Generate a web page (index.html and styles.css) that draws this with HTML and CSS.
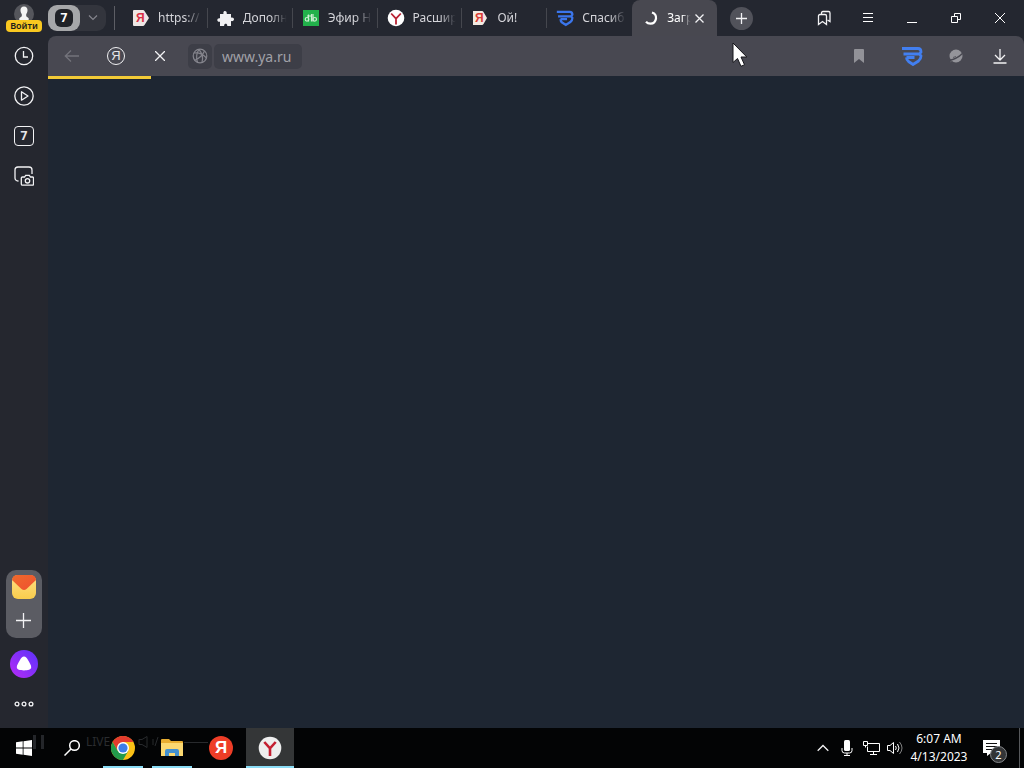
FILE: index.html
```html
<!DOCTYPE html>
<html lang="ru">
<head>
<meta charset="utf-8">
<meta name="viewport" content="width=device-width, initial-scale=1">
<title>Загрузка</title>
<link rel="stylesheet" href="styles.css">
</head>
<body>
<div class="browser">
  <aside class="sidebar">
    <button class="profile" aria-label="Войти">
      <svg class="avatar" width="20" height="20" viewBox="0 0 20 20"><circle cx="10" cy="10" r="10" fill="#55565c"/><path d="M10 2.500c2.500 0 3.700 1.800 3.500 4.300-.1 1.600-.8 2.800-1.300 3.400v2l2.500 2V20H5.300v-5.800l2.500-2v-2C7.300 9.600 6.600 8.400 6.500 6.800 6.300 4.300 7.500 2.500 10 2.500z" fill="#f4f4f4"/></svg>
      <span class="login">Войти</span>
    </button>
    <nav class="side-nav">
      <button class="side-btn" aria-label="История"><svg width="20" height="20" viewBox="0 0 20 20" class="line"><circle cx="10" cy="10" r="8.700"/><path d="M9.500 5v6H14"/></svg></button>
      <button class="side-btn" aria-label="Видео"><svg width="20" height="20" viewBox="0 0 20 20" class="line"><circle cx="10" cy="10" r="9.200"/><path d="M7.500 5.800v8.400L14 10z" stroke-linejoin="round"/></svg></button>
      <button class="side-btn" aria-label="Вкладки"><span class="count-box">7</span></button>
      <button class="side-btn" aria-label="Скриншот"><svg width="20" height="20" viewBox="1 0 20 20" class="line"><path d="M5.500 15H5a3 3 0 0 1-3-3V4a3 3 0 0 1 3-3h11a3 3 0 0 1 3 3v4"/><path d="M9.500 11h2l1.200-1.700h3.600l1.200 1.700h2q1 0 1 1v6q0 1.200-1 1.200h-10q-1.200 0-1.200-1.200V12q0-1 1.200-1z"/><circle cx="14.500" cy="14.800" r="2.200"/></svg></button>
    </nav>
    <div class="dock">
      <button class="dock-btn" aria-label="Почта"><svg width="24" height="24" viewBox="0 0 24 24"><defs><linearGradient id="mail" x1="0" y1="0" x2="0" y2="1"><stop offset="0" stop-color="#ffdf86"/><stop offset="1" stop-color="#f9cd4c"/></linearGradient><linearGradient id="flap" x1="0" y1="0" x2="1" y2="1"><stop offset="0" stop-color="#ef6a2b"/><stop offset="1" stop-color="#ee5030"/></linearGradient></defs><rect width="24" height="24" rx="6" fill="url(#mail)"/><path d="M0 5a5 5 0 0 1 5-5h14a5 5 0 0 1 5 5l-9.500 9q-2.500 2-5 0z" fill="url(#flap)"/></svg></button>
      <button class="dock-btn" aria-label="Добавить"><svg width="16" height="16" viewBox="0 0 16 16" class="line"><path d="M7.500 0v15M0 7.500h15"/></svg></button>
    </div>
    <button class="side-btn" aria-label="Алиса"><svg width="28" height="28" viewBox="0 0 28 28"><defs><linearGradient id="alice" x1="0" y1="1" x2="1" y2="0"><stop offset="0" stop-color="#b72cf6"/><stop offset="1" stop-color="#5a32fa"/></linearGradient></defs><circle cx="14" cy="14" r="14" fill="url(#alice)"/><path d="M14 6.500c1.800 0 2.700 1.300 4 3.500 1.600 2.800 3.200 5.300 3.200 7.100 0 2.700-3.200 3.400-7.200 3.400s-7.200-.7-7.200-3.400c0-1.800 1.600-4.300 3.200-7.100 1.300-2.200 2.200-3.500 4-3.500z" fill="#fff"/></svg></button>
    <button class="side-btn" aria-label="Ещё"><svg width="20" height="8" viewBox="0 0 20 8" class="line"><circle cx="3" cy="4" r="1.900"/><circle cx="10" cy="4" r="1.900"/><circle cx="17" cy="4" r="1.900"/></svg></button>
  </aside>

  <div class="main">
    <header class="tabbar">
      <div class="group">
        <button class="group-count"><span class="group-badge">7</span></button>
        <button class="group-more" aria-label="Группы вкладок"><svg width="12" height="8" viewBox="0 0 12 8" class="muted"><path d="M2 1.500l4 4 4-4"/></svg></button>
      </div>
      <div class="tabs">
        <a class="tab" href="#"><svg class="fav" viewBox="0 0 18 18"><path d="M1 2q0-1 1-1h9q1 0 1.500 1L17 9l-4.500 7q-.5 1-1.500 1H2q-1 0-1-1z" fill="#eee7e5"/><text x="4" y="13" class="ya-mark">Я</text></svg><span class="tab-title">https://</span></a>
        <a class="tab" href="#"><svg class="fav" viewBox="0 0 18 18"><path d="M3 5h3.500C5.500 1 10.500 1 9.700 5H14v3.700c4-1 4 4.300 0 3.400V17h-3.800c.7-3-3.700-3-3 0H3v-4.300c-3.600.8-3.600-4.200 0-3.400z" fill="#f1f1f3"/></svg><span class="tab-title">Дополн</span></a>
        <a class="tab" href="#"><svg class="fav" viewBox="0 0 18 18"><rect x="1" y="1" width="16" height="16" fill="#22b14b"/><path d="M6.500 5.500v7M9.500 5v7.500M11 5v7.500" stroke="#cbeed1" stroke-width="1.200"/><circle cx="5" cy="10.300" r="1.800" fill="none" stroke="#cbeed1" stroke-width="1.200"/><circle cx="12.700" cy="10.300" r="1.800" fill="none" stroke="#cbeed1" stroke-width="1.200"/><path d="M5 7h5" stroke="#cbeed1"/></svg><span class="tab-title">Эфир Н</span></a>
        <a class="tab" href="#"><svg class="fav" viewBox="0 0 18 18"><circle cx="9" cy="9" r="8.300" fill="#fff"/><path d="M4.200 4.500L9 9.600l4.800-5.100M9 9.600v5.900" fill="none" stroke="#b92334" stroke-width="1.800"/></svg><span class="tab-title">Расшир</span></a>
        <a class="tab" href="#"><svg class="fav" viewBox="0 0 18 18"><path d="M2 2h9q1 0 1.500 1L16 9l-3.500 6q-.5 1-1.500 1H2z" fill="#f3eae2"/><text x="4" y="13" class="ya-mark ya-orange">Я</text></svg><span class="tab-title">Ой!</span></a>
        <a class="tab" href="#"><svg class="fav" viewBox="0 0 22 20"><path d="M1 2.500h16q3 0 3 3.500L18.500 8 20 10q0 3-2.500 5L12 18.500 7.500 15.500Q5.500 14 5.500 11.500M2.500 8h16M5.500 11.500h8" fill="none" stroke="#3b76ec" stroke-width="2.800"/></svg><span class="tab-title">Спасиб</span></a>
        <div class="tab active"><svg class="fav" viewBox="0 0 18 18"><path d="M11 3.500q4.500 1.500 4 6-.8 5-5.500 5.200-2.800 0-4.500-2" fill="none" stroke="#fff" stroke-width="2.200"/></svg><span class="tab-title">Загр</span><button class="tab-close" aria-label="Закрыть вкладку"><svg width="9" height="9" viewBox="0 0 9 9" class="line"><path d="M.5.5l8 8M8.500.5l-8 8"/></svg></button></div>
      </div>
      <button class="new-tab" aria-label="Новая вкладка"><svg width="11" height="11" viewBox="0 0 11 11" class="line"><path d="M5.500 0v11M0 5.500h11"/></svg></button>
      <div class="window-controls">
        <button class="bar-btn" aria-label="Коллекции"><svg width="14" height="16" viewBox="0 0 14 16" class="line"><path d="M4.500 4V3q0-1.500 1.500-1.500h5.500Q13 1.500 13 3v8.500L10.500 10"/><path d="M1.500 14.500V6q0-1.500 1.500-1.500h5q1.500 0 1.500 1.500v8.500l-4-3z"/></svg></button>
        <button class="bar-btn" aria-label="Меню"><svg width="10" height="11" viewBox="0 0 10 11" class="thin"><path d="M0 .5h10M0 4.500h10M0 8.500h10"/></svg></button>
        <button class="bar-btn" aria-label="Свернуть"><svg width="10" height="10" viewBox="0 0 10 10" class="thin"><path d="M0 9.500h10"/></svg></button>
        <button class="bar-btn" aria-label="Развернуть"><svg width="10" height="10" viewBox="0 0 10 10" class="thin"><path d="M.5 3.500h6v6h-6zM3.500 3.500v-3h6v6h-3"/></svg></button>
        <button class="bar-btn" aria-label="Закрыть"><svg width="10" height="10" viewBox="0 0 10 10" class="thin"><path d="M0 0l10 10M10 0L0 10"/></svg></button>
      </div>
    </header>

    <div class="toolbar">
      <button class="bar-btn" aria-label="Назад"><svg width="16" height="14" viewBox="0 0 16 14" class="dim"><path d="M15 7H1.500M7 1.500L1.300 7 7 12.500"/></svg></button>
      <button class="bar-btn" aria-label="Яндекс"><span class="ya-round">Я</span></button>
      <button class="bar-btn" aria-label="Остановить"><svg width="10" height="10" viewBox="0 0 10 10" class="line"><path d="M0 0l10 10M10 0L0 10"/></svg></button>
      <button class="site-info" aria-label="О сайте"><svg width="16" height="16" viewBox="0 0 16 16" class="muted"><circle cx="8" cy="8" r="6.800"/><path d="M2 5q7-1 12.500 5M2.500 12.500Q10 9 12.500 3M7 1.500q5 6 3 13M7 1.500Q3 7 5.500 14.300"/></svg></button>
      <form class="address"><input class="url" type="text" value="www.ya.ru" aria-label="Адрес"></form>
      <button class="bar-btn bookmark" aria-label="В закладки"><svg width="10" height="14" viewBox="0 0 10 14"><path d="M1 0h8q1 0 1 1v13L5 10 0 14V1q0-1 1-1z" fill="#929298"/></svg></button>
      <button class="bar-btn" aria-label="Расширение"><svg width="22" height="20" viewBox="0 0 22 20"><path d="M1 2.500h16q3 0 3 3.500L18.500 8 20 10q0 3-2.500 5L12 18.500 7.500 15.500Q5.500 14 5.500 11.500M2.500 8h16M5.500 11.500h8" fill="none" stroke="#427ff0" stroke-width="2.800"/></svg></button>
      <button class="bar-btn" aria-label="Защита"><svg width="14" height="14" viewBox="0 0 14 14"><circle cx="7" cy="7" r="6.500" fill="#94949a"/><path d="M0 11.500Q8 10 14 4" fill="none" stroke="#484851" stroke-width="1.400"/><path d="M1 13l2-1M4 8.500l3-1" stroke="#5b5b62"/></svg></button>
      <button class="bar-btn" aria-label="Загрузки"><svg width="14" height="16" viewBox="0 0 14 16" class="line"><path d="M7 1v11M2 7l5 5 5-5M.5 15h13"/></svg></button>
      <div class="progress" role="progressbar" aria-label="Загрузка страницы"></div>
    </div>
    <main class="page"></main>
  </div>
</div>

<footer class="taskbar">
  <button class="task" aria-label="Start"><svg width="16" height="16" viewBox="0 0 16 16"><path d="M0 2.300l6.700-1v6.300H0zM7.500 1.200L16 0v7.600H7.500zM0 8.400h6.700v6.300L0 13.700zM7.500 8.400H16V16l-8.500-1.200z" fill="#fff"/></svg></button>
  <button class="task" aria-label="Search"><svg width="16" height="16" viewBox="0 0 16 16" fill="none" stroke="#fff" stroke-width="1.500"><circle cx="10.500" cy="5.500" r="4.800"/><path d="M7 9L.5 15.500"/></svg></button>
  <div class="apps">
    <button class="task running" aria-label="Chrome"><svg width="24" height="24" viewBox="0 0 24 24"><circle cx="12" cy="12" r="12" fill="#fbc116"/><path d="M1.600 6a12 12 0 0 1 20.800 0H12l-5.200 9z" fill="#e33b2e"/><path d="M1.600 6A12 12 0 0 0 12 24l5.200-9-5.200 1-5.200-1z" fill="#229a4b"/><circle cx="12" cy="12" r="6" fill="#fff"/><circle cx="12" cy="12" r="4.600" fill="#3c7de8"/></svg></button>
    <button class="task running" aria-label="Explorer"><svg width="22" height="20" viewBox="0 0 22 20"><path d="M0 2q0-1 1-1h7l2 2h11q1 0 1 1v14H0z" fill="#e8ad31"/><path d="M0 5h22v13H0z" fill="#fbd871"/><path d="M4 18v-5q0-2 2-2h10q2 0 2 2v5h-4v-3H8v3z" fill="#4390cf"/></svg></button>
    <button class="task" aria-label="Yandex"><span class="ya-app">Я</span></button>
    <button class="task running current" aria-label="Yandex Browser"><svg width="24" height="24" viewBox="0 0 24 24"><circle cx="12" cy="12" r="11.300" fill="#eee"/><path d="M6.300 6l5.700 6.300L17.700 6M12 12.300V20" fill="none" stroke="#c41f31" stroke-width="2.600"/></svg></button>
  </div>
  <div class="tray">
    <button class="tray-btn" aria-label="Hidden icons"><svg width="12" height="8" viewBox="0 0 12 8" class="line"><path d="M.7 6.800L6 1.500l5.300 5.300"/></svg></button>
    <button class="tray-btn" aria-label="Microphone"><svg width="12" height="16" viewBox="0 0 12 16"><rect x="3" width="6" height="11" rx="1.500" fill="#fff"/><path d="M1 8v2.500Q1 13 3.500 13h5q2.500 0 2.500-2.500V8M6 13v3M3 15.500h6" fill="none" stroke="#fff"/></svg></button>
    <button class="tray-btn" aria-label="Network"><svg width="17" height="15" viewBox="0 0 17 15" class="thin"><path d="M5 2.500h11.500v8H4.500v-5M10.500 10.500v3M7 13.500h7M.5.500h4v4h-4zM2.500 4.500v2"/></svg></button>
    <button class="tray-btn" aria-label="Volume"><svg width="16" height="14" viewBox="0 0 16 14" class="thin"><path d="M.5 4.500H3l3.500-3v11L3 9.500H.5zM8.500 5q1.500 2 0 4M10.500 3q3 4 0 8"/><path d="M12.500 1q5 6 0 12" opacity=".5"/></svg></button>
    <button class="clock"><time>6:07 AM</time><time>4/13/2023</time></button>
    <button class="notice" aria-label="Notifications"><svg width="17" height="16" viewBox="0 0 17 16"><path d="M0 0h17v13H8l-4 3v-3H0z" fill="#fff"/><path d="M3 3.500h11M3 6.500h11M3 9.500h8" stroke="#111"/></svg><span class="notice-count">2</span></button>
    <button class="show-desktop" aria-label="Show desktop"></button>
  </div>
  <div class="player" aria-hidden="true"><svg width="11" height="14" viewBox="0 0 11 14"><path d="M0 0h3v14H0zM8 0h3v14H8z" fill="#24262a"/></svg><span class="live">LIVE</span><svg width="70" height="14" viewBox="0 0 70 14" fill="none" stroke="#282a2d"><path d="M1 4.500h3l5-3v11l-5-3H1zM15 4v6M17 11l3-9M46 7.500h24"/></svg></div>
</footer>

<svg class="cursor" width="16" height="25" viewBox="0 0 16 25" aria-hidden="true"><path d="M1 1v19.500l4.500-4 3.500 7.800 3.500-1.600L9 15h5.800z" fill="#fff" stroke="#15151a"/></svg>
</body>
</html>
```
FILE: styles.css
```css
* { box-sizing: border-box; }
body {
  margin: 0;
  min-height: 100vh;
  display: flex;
  flex-direction: column;
  background: #1e2632;
  color: #e6e6ea;
  font: 12px/16px "Noto Sans", "Open Sans", sans-serif;
}
button {
  margin: 0;
  padding: 0;
  border: 0;
  background: none;
  color: inherit;
  font: inherit;
  display: flex;
  align-items: center;
  justify-content: center;
}
svg { display: block; flex: none; }
.line { fill: none; stroke: #f2f2f4; stroke-width: 1.3; }
.thin { fill: none; stroke: #fff; stroke-width: 1; }
.muted { fill: none; stroke: #85858d; stroke-width: 1.2; }
.dim { fill: none; stroke: #73737b; stroke-width: 1.3; }

.browser { flex: 1; display: flex; background: #242730; }

/* Sidebar */
.sidebar {
  width: 48px;
  flex: none;
  display: flex;
  flex-direction: column;
  align-items: center;
  padding-bottom: 4px;
  background: #25272f;
}
.profile { flex-direction: column; height: 36px; }
.avatar { margin-bottom: -4px; }
.login {
  width: 36px;
  border-radius: 4px;
  background: #f9c820;
  color: #1c1c1c;
  font-size: 9px;
  font-weight: 600;
  line-height: 12px;
}
.side-nav { flex: 1; }
.side-btn { width: 48px; height: 40px; }
.count-box {
  width: 20px;
  height: 20px;
  border: 1px solid #f2f2f4;
  border-radius: 4px;
  font-size: 12px;
  font-weight: 700;
  line-height: 18px;
}
.dock {
  width: 36px;
  margin-bottom: 6px;
  border-radius: 10px;
  background: #5b5c63;
}
.dock-btn { width: 36px; height: 34px; }

/* Tabs */
.main { flex: 1; min-width: 0; display: flex; flex-direction: column; }
.tabbar { height: 36px; display: flex; align-items: center; }
.group {
  display: flex;
  width: 58px;
  height: 26px;
  border-radius: 9px;
  background: #33353d;
  position: relative;
}
.group::after {
  content: "";
  position: absolute;
  left: 66px;
  top: 1px;
  width: 1px;
  height: 24px;
  background: #5d5e65;
}
.group-count { width: 32px; border-radius: 9px; background: #a6a7a9; }
.group-badge {
  width: 18px;
  height: 18px;
  border-radius: 6px;
  background: #202227;
  color: #fff;
  font-weight: 700;
  line-height: 18px;
}
.group-more { flex: 1; }
.tabs {
  flex: 0 1 594px;
  min-width: 0;
  height: 36px;
  margin-left: 17px;
  display: grid;
  grid-template-columns: repeat(7, minmax(0, 1fr));
}
.tab {
  display: flex;
  align-items: center;
  gap: 8px;
  padding: 0 4px 0 9px;
  color: #d5d5da;
  text-decoration: none;
  position: relative;
}
.tab:nth-child(-n+5)::after {
  content: "";
  position: absolute;
  right: 0;
  top: 8px;
  height: 20px;
  width: 1px;
  background: #45474e;
}
.fav { width: 18px; height: 18px; }
.ya-mark { font: 700 12px "Liberation Sans", sans-serif; fill: #d92f44; }
.ya-orange { fill: #dc3f35; }
.tab-title {
  flex: 1;
  min-width: 0;
  overflow: hidden;
  white-space: nowrap;
  -webkit-mask-image: linear-gradient(to right, #000 60%, transparent 95%);
  mask-image: linear-gradient(to right, #000 60%, transparent 95%);
}
.active {
  padding-right: 9px;
  border-radius: 8px 8px 0 0;
  background: #484850;
  color: #fff;
}
.tab-close { width: 16px; height: 16px; margin-left: -8px; }
.new-tab {
  width: 23px;
  height: 23px;
  margin: 0 12px 0 13px;
  border-radius: 50%;
  background: #51525a;
}
.window-controls { display: flex; margin-left: auto; padding-right: 2px; }
.bar-btn { width: 44px; height: 36px; flex: none; }

/* Toolbar */
.toolbar {
  height: 40px;
  display: flex;
  align-items: center;
  padding: 0 2px;
  border-radius: 8px 8px 0 0;
  background: #484851;
  position: relative;
}
.ya-round {
  width: 18px;
  height: 18px;
  border: 1px solid #f2f2f4;
  border-radius: 50%;
  font: 13px/16px "Liberation Sans", sans-serif;
}
.site-info {
  width: 24px;
  height: 25px;
  margin: 0 2px 0 6px;
  border-radius: 5px;
  background: #3d3e47;
}
.address { flex: 1; margin: 0; }
.url {
  display: block;
  width: 88px;
  height: 25px;
  padding: 0 4px 0 8px;
  border: 0;
  border-radius: 5px;
  outline: 0;
  background: #3d3e47;
  color: #a1a1a8;
  font: 14px/24px "Noto Sans", sans-serif;
}
.bookmark { margin-right: 9px; }
.progress {
  position: absolute;
  left: 0;
  bottom: -3px;
  width: 103px;
  height: 3px;
  background: #f3cb37;
}
.page { flex: 1; background: #1e2632; }

/* Taskbar */
.taskbar {
  height: 40px;
  display: flex;
  background: #030405;
  color: #fff;
  position: relative;
}
.task { width: 48px; height: 40px; position: relative; z-index: 1; }
.apps { display: flex; gap: 1px; margin-left: 3px; }
.running::after {
  content: "";
  position: absolute;
  left: 4px;
  right: 4px;
  bottom: 0;
  height: 2px;
  background: #8adcf5;
}
.current { background: #343637; }
.current::after { left: 0; right: 0; }
.ya-app {
  width: 24px;
  height: 24px;
  border-radius: 50%;
  background: #ee3d27;
  font: 700 17px/24px "Liberation Sans", sans-serif;
}
.tray { display: flex; margin-left: auto; }
.tray-btn { width: 24px; height: 40px; }
.clock {
  width: 64px;
  flex-direction: column;
  line-height: 18px;
}
.notice { width: 48px; padding-right: 8px; position: relative; }
.notice-count {
  position: absolute;
  left: 19px;
  top: 18px;
  width: 17px;
  height: 17px;
  border: 1px solid #85878a;
  border-radius: 50%;
  background: #333537;
  font-size: 11px;
  line-height: 15px;
}
.show-desktop { width: 5px; border-left: 1px solid #56585b; }
.player {
  position: absolute;
  left: 33px;
  top: 6px;
  display: flex;
  align-items: center;
  color: #2a2c2f;
}
.live { margin: 0 28px 0 42px; }
.cursor { position: absolute; left: 732px; top: 42px; }
```
